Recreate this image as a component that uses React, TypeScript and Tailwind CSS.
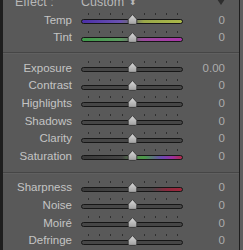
import React from 'react';

type Row = { label: string; value: string; fill?: string };

const TICKS = [6.5, 18, 29, 40.5, 63, 74, 85, 96];

const basic: Row[] = [
  { label: 'Temp', value: '0', fill: 'bg-[linear-gradient(90deg,#4b2fa8_0%,#6a52b0_38%,#6b6b6b_50%,#9aa84a_62%,#aab848_100%)]' },
  { label: 'Tint', value: '0', fill: 'bg-[linear-gradient(90deg,#3f9a4a_0%,#5a9a5e_38%,#6b6b6b_50%,#9a4a9c_62%,#a836a8_100%)]' },
];

const tone: Row[] = [
  { label: 'Exposure', value: '0.00' },
  { label: 'Contrast', value: '0' },
  { label: 'Highlights', value: '0' },
  { label: 'Shadows', value: '0' },
  { label: 'Clarity', value: '0' },
  { label: 'Saturation', value: '0', fill: 'bg-[linear-gradient(90deg,#3a3a3a_0%,#444_40%,#5a8a50_52%,#4a9a48_62%,#6a4ab0_80%,#9a30a0_90%,#b02a48_100%)]' },
];

const detail: Row[] = [
  { label: 'Sharpness', value: '0', fill: 'bg-[linear-gradient(90deg,#3a3a3a_0%,#484848_55%,#4a4446_70%,#8a2a3e_85%,#a0283c_100%)]' },
  { label: 'Noise', value: '0' },
  { label: 'Moiré', value: '0' },
  { label: 'Defringe', value: '0' },
];

function Thumb() {
  return (
    <svg width="11" height="11" viewBox="0 0 11 11" className="absolute left-[46px] top-[-5px]">
      <defs>
        <linearGradient id="th" x1="0" y1="0" x2="0" y2="1">
          <stop offset="0" stopColor="#d8d8d8" />
          <stop offset="1" stopColor="#a0a0a0" />
        </linearGradient>
      </defs>
      <path d="M5.5 0.6 L9.8 5.2 L9.8 8.9 Q9.8 10.4 8.3 10.4 L2.7 10.4 Q1.2 10.4 1.2 8.9 L1.2 5.2 Z" fill="url(#th)" stroke="#333" strokeWidth="0.9" />
    </svg>
  );
}

function SliderRow({ label, value, fill }: Row) {
  return (
    <div className="flex h-[18px] items-center">
      <div className="w-[69px] text-right text-[11.5px] leading-none text-[#c4c4c4]">{label}</div>
      <div className="relative ml-[9px] h-[5px] w-[102px] translate-y-[1px]">
        {TICKS.map((t) => (
          <div key={t} className="absolute top-[-6px] h-[2px] w-px bg-[#2f2f2f]" style={{ left: t }} />
        ))}
        <div className={`h-full w-full rounded-full border border-[#161616] ${fill ?? 'bg-[#464646]'}`} />
        <Thumb />
      </div>
      <div className="w-[42px] text-right text-[11.5px] leading-none text-[#acacac]">{value}</div>
    </div>
  );
}

function Divider() {
  return (
    <div className="flex h-[13px] flex-col justify-center">
      <div className="h-px bg-[#464646]" />
      <div className="h-px bg-[#606060]" />
    </div>
  );
}

export default function App() {
  return (
    <div className="flex h-[250px] w-[243px] overflow-hidden bg-[#595959]" style={{ fontFamily: '"Liberation Sans", Arial, sans-serif' }}>
      <div className="w-[3px] bg-[#1e1e1e]" />
      <div className="flex w-[236px] flex-col">
        <div className="-mt-[7px] flex h-[19px] items-center text-[12.5px] leading-none text-[#b8b8b8]">
          <span className="ml-[12px] w-[66px]">Effect :</span>
          <span>Custom</span>
          <span className="ml-[5px] text-[9px]">⬍</span>
          <svg width="8" height="6" viewBox="0 0 8 6" className="ml-auto mr-[14px]">
            <path d="M0 0 L8 0 L4 6 Z" fill="#2e2e2e" />
          </svg>
        </div>
        {basic.map((r) => (
          <SliderRow key={r.label} {...r} />
        ))}
        <Divider />
        {tone.map((r) => (
          <SliderRow key={r.label} {...r} />
        ))}
        <div className="h-px" />
        <Divider />
        {detail.map((r) => (
          <SliderRow key={r.label} {...r} />
        ))}
      </div>
      <div className="w-px bg-[#1e1e1e]" />
      <div className="flex-1 bg-[#5e5e5e]" />
    </div>
  );
}
